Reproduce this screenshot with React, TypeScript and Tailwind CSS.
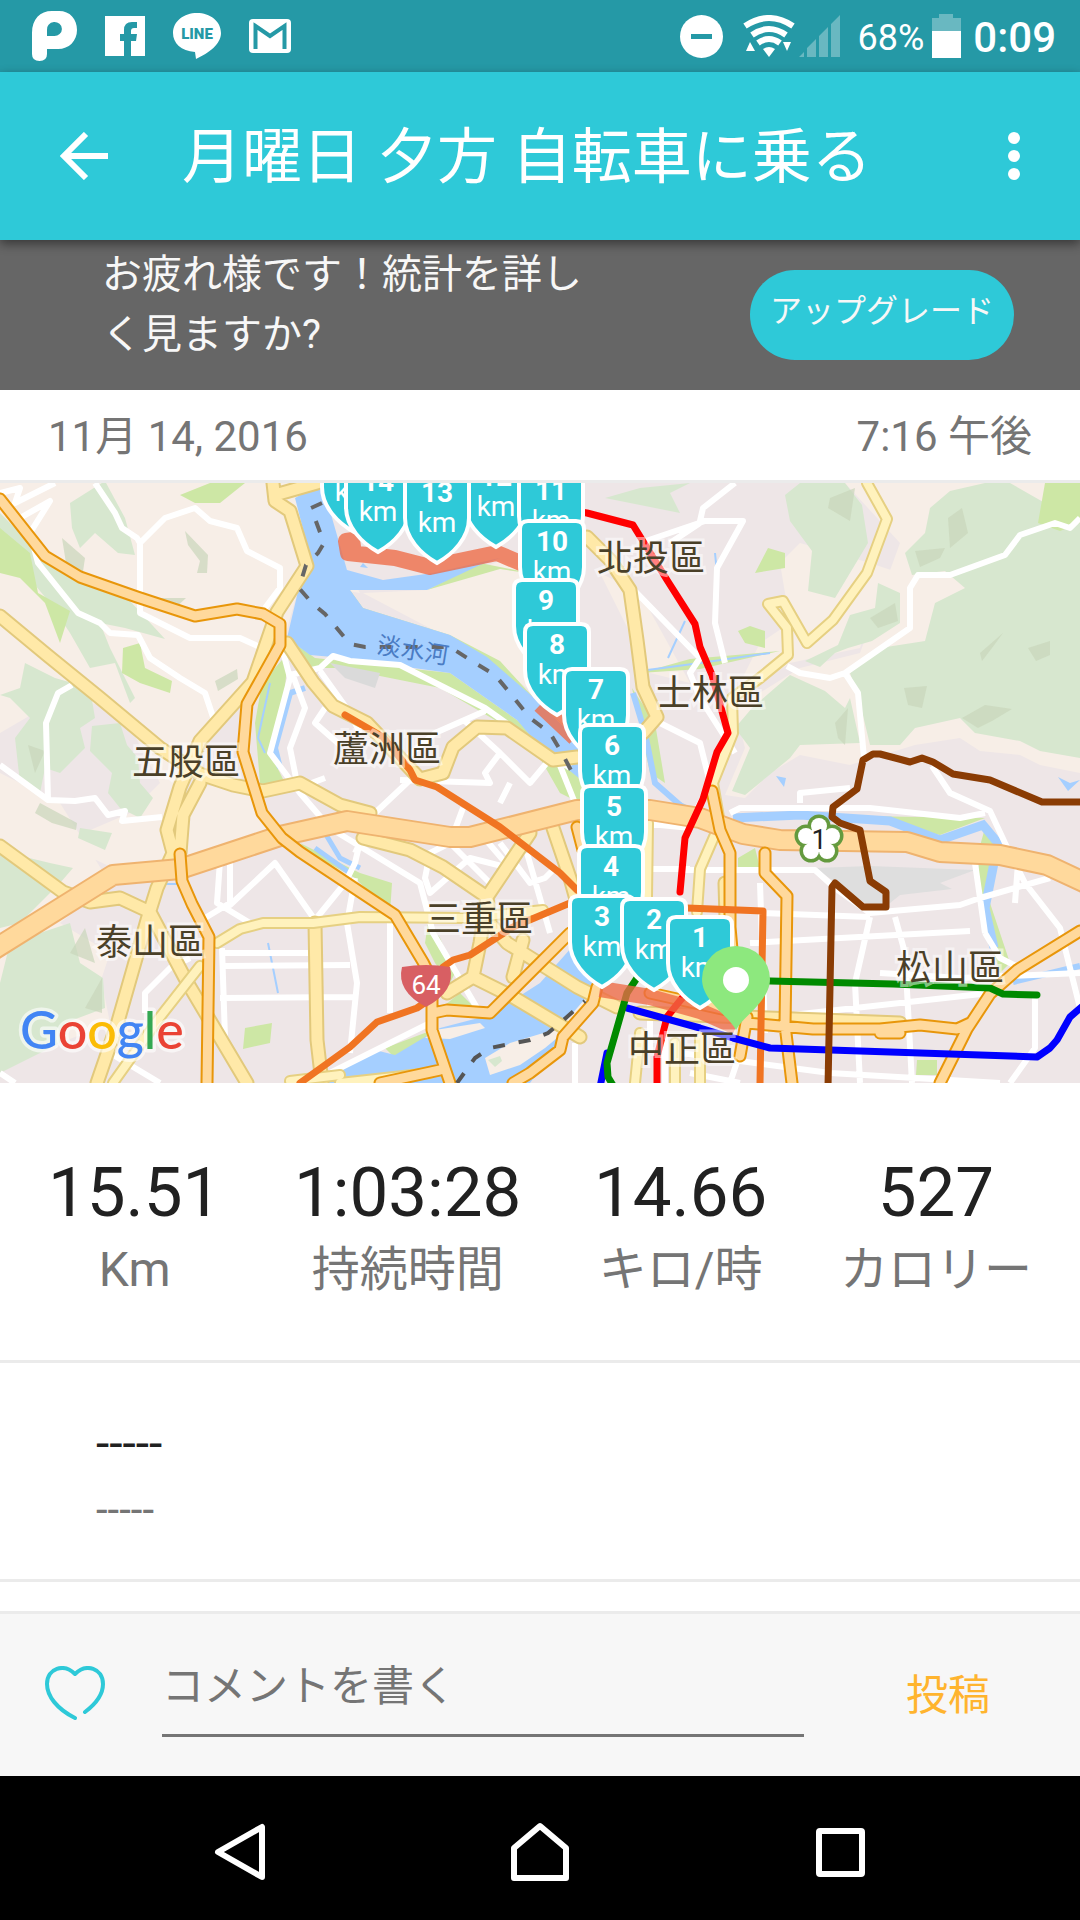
import React from 'react';

interface Marker {
  km: number;
  x: number;
  y: number;
}

// x is the centre of the badge, y its top edge
const markers: Marker[] = [
  { km: 15, x: 354, y: -44 },
  { km: 12, x: 496, y: -29 },
  { km: 14, x: 378, y: -24 },
  { km: 11, x: 551, y: -15 },
  { km: 13, x: 437, y: -13 },
  { km: 10, x: 552, y: 36 },
  { km: 9, x: 546, y: 95 },
  { km: 8, x: 557, y: 139 },
  { km: 7, x: 596, y: 184 },
  { km: 6, x: 612, y: 240 },
  { km: 5, x: 614, y: 301 },
  { km: 4, x: 611, y: 361 },
  { km: 3, x: 602, y: 411 },
  { km: 2, x: 654, y: 414 },
  { km: 1, x: 700, y: 432 },
];

const districts = [
  { name: '五股區', x: 186, y: 292 },
  { name: '蘆洲區', x: 387, y: 279 },
  { name: '北投區', x: 651, y: 88 },
  { name: '士林區', x: 710, y: 223 },
  { name: '泰山區', x: 150, y: 472 },
  { name: '三重區', x: 479, y: 449 },
  { name: '中正區', x: 682, y: 579 },
  { name: '松山區', x: 950, y: 498 },
];

const stats = [
  { value: '15.51', label: 'Km' },
  { value: '1:03:28', label: '持続時間' },
  { value: '14.66', label: 'キロ/時' },
  { value: '527', label: 'カロリー' },
];

const beige = [
  'M0 0H315L347 87L360 110L300 100L283 160L250 210L200 270L170 330L175 380L113 385L60 360L130 330L160 300L120 225L60 215L0 250Z',
  'M0 290L60 320L110 400L60 440L110 470L100 500L0 520Z',
  'M195 300L250 310L262 335L275 350L185 380Z',
  'M363 110L427 107L500 78L540 90L560 150L600 200L540 215L487 174L420 140Z',
  'M600 90L640 110L690 200L650 190Z',
  'M780 80L800 60L870 80L900 90L905 120L870 130L860 165L790 180L760 200L740 200L760 160L790 140Z',
  'M845 0H1080V290L1040 282L1020 272L980 268L960 255L915 262L850 282L800 272L770 290L745 315L725 312L745 265L735 225L800 185L860 170L900 60Z',
  'M40 480L100 490L110 540L60 560Z',
];

const hills = [
  'M70 20L105 -2L125 35L135 72L118 70L95 50L80 65L72 45Z',
  'M0 30L30 60L55 80L130 118L165 156L125 145L100 140L110 165L135 215L130 220L115 180L90 185L70 150L50 120L25 90L0 70Z',
  'M25 180L55 195L90 205L95 235L80 245L85 265L60 290L45 285L40 310L20 300L15 255L30 235L10 215L0 212L20 205Z',
  'M92 243L120 240L127 262L138 275L140 300L153 315L140 335L120 325L108 310L112 290L90 268Z',
  'M80 345L112 350L105 367L78 355Z',
  'M0 368L50 380L73 385L60 400L20 440L0 445Z',
  'M10 460L70 440L80 480L103 495L105 525L65 540L60 560L30 575L0 590V500Z',
  'M605 15L640 5L690 0L670 10L680 30L655 25Z',
  'M785 12L800 0L845 0L862 22L868 60L850 90L835 115L808 108L812 68L790 38Z',
  'M905 70L925 50L930 25L950 8L985 0H1010L1080 40V275L1040 268L1020 258L975 250L960 235L915 245L900 262L870 262L860 220L850 190L880 165L925 158L935 120L965 105L945 88L912 92Z',
  'M835 170L820 184L805 178L838 162L850 132L875 125L878 100L900 110V140L872 158L848 165Z',
  'M752 225L790 192L825 208L845 225L850 215L860 260L800 262L790 275L745 312L732 308L750 265L735 245Z',
];

const darkHills = [
  'M185 48L208 72L207 90L197 90L200 78L188 62Z',
  'M160 115L186 115L172 128L155 120Z',
  'M215 198L237 186L238 196L218 208Z',
  'M40 320L77 340L76 347L52 340L35 330Z',
  'M62 55L85 75L82 95L66 80Z',
  'M85 445L95 480L70 470Z',
  'M85 525L102 495V530Z',
  'M28 262L45 268L35 290Z',
  'M830 15L855 5L850 38L828 25Z',
  'M980 170L1003 150L992 165L982 178Z',
  'M962 235L985 222L1012 226L992 238L978 245Z',
  'M904 205L927 203L922 225L908 222Z',
  'M835 240L848 225L845 262L838 255Z',
  'M1028 165L1050 158V172L1036 178Z',
  'M915 68L945 65L940 75L920 84Z',
  'M948 35L962 25L968 50L950 65Z',
  'M870 135L895 120L898 138L878 145Z',
];

const parks = [
  'M0 45L30 70L38 110L70 128L60 160L45 120L20 95L0 90Z',
  'M123 165L140 160L145 185L172 198L170 210L140 200L122 190Z',
  'M180 12L210 0H245L220 20L195 20Z',
  'M350 107L363 125L450 152L500 178L533 214L575 252L520 205L450 160L355 128Z',
  'M287 155L315 175L450 190L517 237L585 295L600 330L560 310L540 275L500 240L440 205L340 185L300 185Z',
  'M427 107L480 80L520 88L540 92L500 86Z',
  'M262 200L288 170L285 205L270 270L290 310L260 300L255 240Z',
  'M300 360L360 390L392 400L390 430L355 395L310 370Z',
  'M428 440L440 455L455 490L450 500L435 480L425 460Z',
  'M385 565L430 548L440 552L395 575Z',
  'M435 530L460 510L475 525Z',
  'M755 90L768 65L785 70V85Z',
  'M738 148L750 143L765 148V165L745 160Z',
  'M690 176L780 168L700 186L640 190Z',
  'M860 333L985 335L940 352Z',
  'M985 345L1000 360L990 420L1010 480L1000 490L980 425L978 370Z',
  'M738 375L755 365L760 385L738 385Z',
  'M917 577H937V592H916Z',
  'M1038 40L1045 0H1080V40L1060 48Z',
  'M632 205L655 240L665 300L650 290Z',
  'M245 545L272 540L270 560L243 566Z',
];

const minorRoads = [
  'M0 10L20 5L15 20L55 0M20 35L50 18L30 50L38 80L78 130L100 140L110 150L138 152L150 175L180 195L205 210L215 240',
  'M95 0L115 30L122 45L137 55L140 60L165 35L195 25L210 38L237 45L247 68L280 85V105L265 125M140 60L140 130L190 155L240 155L262 165',
  'M0 282L48 317L75 318L95 315L108 332L125 328L122 338L162 334M48 317L46 240L58 210L72 202',
  'M282 165L290 195L270 270L300 310L330 345L420 400L433 450L480 530',
  'M290 192L320 185L333 173L350 178L400 182L485 225L570 285',
  'M320 188L350 230L360 250M325 225L315 240L340 262M292 190L305 225L290 265L298 305L325 295',
  'M220 378L217 420L250 440M230 380L230 422L275 380L315 437M205 435L230 420M315 437L345 400L355 380L362 350',
  'M220 470H312M225 483L350 482M220 515L353 514M222 465L225 555M355 395L347 440L357 500L350 570M390 430V530M145 530V510L170 485L190 475',
  'M110 570L160 600M0 590L15 600M330 590L430 540M355 370L375 330L410 297M340 345L370 330',
  'M463 325L450 360L430 370L425 395L430 410L470 375L510 385L480 350L545 340L580 330M450 360L490 400M500 360L530 400L545 395L555 385M527 370L550 450',
  'M400 280L435 250L485 228M465 238L500 270L530 300L555 270M500 270L485 290L490 300L400 297M555 270L575 320M500 320L510 300',
  'M632 105L700 175L690 190L700 215L735 270M660 240L700 260L710 300L690 340M640 60L705 38',
  'M735 0L703 25L700 38H743L717 85L715 140L725 180M670 60L700 40M787 183L800 190L830 195L845 190L910 145V105L918 92L950 92L1005 72L1020 52L1055 40L1070 45L1080 35',
  'M845 190L858 210L864 275M932 283L950 310L990 328L1005 360L1025 400L1060 445L1080 525M730 330L740 325L870 325L960 335L985 330M800 320V310L850 305',
  'M680 387H815L835 405L870 430L960 422L980 415L1050 395M760 430L870 434M750 460L970 448M975 380L985 450M1018 380L1015 420',
  'M870 434L855 500L860 600M895 434L905 470L912 600M760 400L765 550M765 535L990 510M1035 515V565L1010 600M680 570L830 590L1000 600M880 490L960 495L1080 490',
  'M640 340L690 345M640 386H690M650 330L648 460M985 450L1000 475L1020 485M650 520V570M665 540V600M575 560L575 600M690 590L740 600M740 570L730 600',
];

const yellowRoads = [
  'M0 133L47 172L100 215L160 265L200 291L233 302L263 308L300 300L340 322L370 330',
  'M273 0L275 18L290 28L307 83L277 129L253 199L200 258L180 304L167 347L173 370L157 405L147 437L117 542L97 600',
  'M275 12L317 0M200 300L183 332L180 370',
  'M0 363L63 409L90 419L120 415L150 429L187 499L247 600',
  'M315 440L317 557L322 600',
  'M287 160L313 199L333 223L367 240L420 296L443 290L453 264L477 244L507 245L553 277L577 274',
  'M587 54L610 77L630 107L637 157L643 204L657 234L643 250',
  'M363 355L410 367L443 384L487 414L490 440L507 460L550 487L577 504L617 524',
  'M530 350L487 414L480 460L473 494L447 510M473 494L513 514L580 554M513 494L523 457',
  'M553 345L570 395L577 420M640 530L900 540M725 400L727 470',
];

const paleRoads = [
  'M217 460L240 446L263 440L313 440L360 434L467 435L543 427',
  'M200 483L160 534L113 600M290 598L340 592',
  'M867 0L887 36L867 90L833 137L807 160L783 118L768 121L787 145L788 172L760 195L732 215L733 250L713 300L720 340L700 386L697 429',
  'M648 340L647 414M640 550L635 600M675 560V600M700 555V600M340 600L430 590',
];

const orangeRoads = [
  'M0 16L45 73L80 94L137 114L195 133L237 126L263 131L280 141V162L247 221L243 269L262 330L282 355L300 369L395 432L423 479L432 497V547L450 600',
  'M180 371L182 398L192 421L209 454L207 600',
  'M433 530L447 527L490 530L570 450M597 504L593 520L563 554L560 567L530 590L513 600M380 600L440 587',
  'M577 344L583 367M712 308L720 347L730 370V444L735 500M747 534L740 573M765 370V390L787 413L785 542L792 600',
  'M747 540L813 546L880 546L920 542L957 546L970 540M880 550L900 550M1080 448L1017 487L990 511L967 546L940 600M650 510L740 530',
];

const highway =
  'M-10 469L113 392L180 386L280 353L347 338L450 354H470L577 327H650L700 335L743 351L780 357L907 359L940 369L1000 372L1047 382L1090 402';

const Roads: React.FC<{ paths: string[]; casing: string; fill: string; width: number }> = ({ paths, casing, fill, width }) => {
  const d = paths.join('');
  return (
    <g fill="none" strokeLinejoin="round" strokeLinecap="round">
      <path d={d} stroke={casing} strokeWidth={width} />
      <path d={d} stroke={fill} strokeWidth={width - 4} />
    </g>
  );
};

const KmMarker: React.FC<Marker> = ({ km, x, y }) => (
  <g transform={`translate(${x} ${y})`} textAnchor="middle" fill="#fff">
    <path
      d="M-24 2H24Q32 2 32 10V48C32 68 16 84 0 93C-16 84 -32 68 -32 48V10Q-32 2 -24 2Z"
      fill="#2ec9d8"
      stroke="#fff"
      strokeWidth="4"
    />
    <text y="32" fontSize="28" fontWeight="700">{km}</text>
    <text y="62" fontSize="28">km</text>
  </g>
);

const RouteMap: React.FC = () => (
  <svg viewBox="0 0 1080 600" className="block w-full h-auto" role="img" aria-label="ルート">
    <rect width="1080" height="600" fill="#eee6e7" />
    <path d={beige.join('')} fill="#f7eee7" />
    <path d={hills.join('')} fill="#d7e7cf" />
    <path d={parks.join('')} fill="#cde7a5" />
    <path d={darkHills.join('')} fill="#c9d6bb" opacity="0.7" />
    <path d="M815 385L870 383L975 387L940 400L952 406L900 412L885 424L865 420Z" fill="#dedede" />
    <path d="M330 180L380 190L375 205L345 195Z" fill="#dadada" />

    {/* water */}
    <path
      d="M322 0L347 87L383 97L433 90L500 75L480 82L427 107L350 107L363 125L450 152L487 174L533 214L567 247L600 290L610 400L600 500L590 530L560 560L530 600H322L350 580L375 567L395 572L440 545L490 532L540 500L580 455L590 400L585 300L540 264L517 237L450 190L333 174L310 172L287 155L300 100L313 85L295 15Z"
      fill="#a5cfff"
    />
    <path d="M363 80L368 85L360 84Z" fill="#a5cfff" />
    <path d="M485 575L510 560L560 545L590 510L575 540L545 565L520 582L490 592Z" fill="#f7eee7" />
    <path d="M435 547L480 540L485 545L450 556L425 555Z" fill="#f7eee7" />
    <path d="M488 577L500 573L502 578L495 584Z" fill="#d7e7cf" />
    <g fill="none" stroke="#a5cfff">
      <path d="M733 335L800 332L890 338L940 357L983 342L998 360L985 425L994 465" strokeWidth="9" />
      <path d="M1013 499L1080 483M633 210L645 250L655 300L680 322M305 205L290 210L275 265L280 285" strokeWidth="6" />
      <path d="M640 188L700 180L770 170M685 138L668 175M715 70L717 90M270 200L258 255L265 270M155 401H180M268 460L278 510M680 320L690 325" strokeWidth="2" />
      <path d="M315 365L350 390M325 350L340 375L360 385" strokeWidth="5" />
    </g>
    <path d="M776 293L786 295L784 304ZM1058 294L1070 300L1080 297L1068 308Z" fill="#a5cfff" />

    <path d={minorRoads.join('')} fill="none" stroke="#fff" strokeWidth="6" strokeLinejoin="round" />
    <Roads paths={yellowRoads} casing="#e2c97c" fill="#ffe9a8" width={15} />
    <Roads paths={paleRoads} casing="#e6d082" fill="#fff2bd" width={12} />
    <Roads paths={[highway]} casing="#efb36f" fill="#ffd99c" width={22} />
    <Roads paths={orangeRoads} casing="#e8960a" fill="#ffd99c" width={13} />

    <path
      d="M322 20L311 25L324 60L318 70L306 82L299 105L312 120L325 131L350 161L365 164H450L475 180L495 192L510 210L530 235L550 250L562 270L575 295"
      fill="none"
      stroke="#666"
      strokeWidth="4"
      strokeDasharray="12 14"
    />
    <path d="M457 600L475 575L490 565L530 557L548 550L560 540L585 518" fill="none" stroke="#555" strokeWidth="4" strokeDasharray="12 14" />

    {/* transit lines */}
    <g fill="none" strokeWidth="7" strokeLinejoin="round" strokeLinecap="round">
      <path d="M345 232L383 254L410 287L415 297L437 304L500 344L560 390L577 407M300 600L350 564L377 539L417 525L433 514L443 484L453 477L470 472L513 444L570 420M687 425L763 428L760 600" stroke="#f07422" />
      <path d="M575 28L587 30L633 42L667 97L695 141L700 164L712 192L728 250L717 269L703 316L685 355L680 409M683 514L667 534L657 574V604" stroke="#f00" />
      <path d="M607 570L600 604M627 525L700 545L733 555L770 565L1037 574L1050 565L1057 557L1070 534L1084 522" stroke="#00f" />
      <path d="M637 495L627 510L607 580L608 594L614 604M770 498L893 501L990 505L1003 511L1037 512" stroke="#008a00" />
      <path d="M1090 319H1042L990 297L953 291L933 279L922 275L910 279L880 271H873L863 277L857 306L833 324L832 334L840 340L860 347L870 398L886 409V424H863L835 400L832 404L828 604" stroke="#8a3c04" />
    </g>

    {/* ridden route */}
    <path
      d="M360 56L346 58L348 70L395 75L430 84L497 70L530 84M540 222L575 255M600 506L650 514L700 528L736 544"
      fill="none"
      stroke="#ee6a45"
      strokeOpacity="0.78"
      strokeWidth="16"
      strokeLinejoin="round"
    />

    <g
      className="font-['Noto_Sans_CJK_TC',sans-serif]"
      fontSize="36"
      textAnchor="middle"
      fill="#4a4028"
      stroke="#fff"
      strokeOpacity="0.5"
      strokeWidth="6"
      paintOrder="stroke"
    >
      {districts.map((d) => (
        <text key={d.name} x={d.x} y={d.y}>{d.name}</text>
      ))}
    </g>
    <text
      transform="translate(376 170) rotate(9)"
      fontSize="24"
      fill="#4a7cc4"
      className="font-['Noto_Sans_CJK_TC',sans-serif]"
    >
      淡水河
    </text>

    {/* road shields */}
    <path d="M402 484Q426 480 450 484Q456 508 426 524Q396 508 402 484Z" fill="#d85f63" />
    <text x="426" y="511" fontSize="26" textAnchor="middle" fill="#fff">64</text>
    <g fill="#fff" stroke="#649a3e" strokeWidth="5">
      <circle cx="819" cy="343" r="9" />
      <circle cx="806" cy="353" r="9" />
      <circle cx="832" cy="353" r="9" />
      <circle cx="811" cy="368" r="9" />
      <circle cx="827" cy="368" r="9" />
    </g>
    <g fill="#fff">
      <circle cx="819" cy="343" r="8" />
      <circle cx="806" cy="353" r="8" />
      <circle cx="832" cy="353" r="8" />
      <circle cx="811" cy="368" r="8" />
      <circle cx="827" cy="368" r="8" />
      <circle cx="819" cy="357" r="12" />
    </g>
    <text x="819" y="366" fontSize="27" textAnchor="middle" fill="#222">1</text>

    <g className="font-['Roboto','Noto_Sans_CJK_JP',sans-serif]">
      {markers.map((m) => (
        <KmMarker key={m.km} {...m} />
      ))}
    </g>
    <path d="M736 547C728 532 702 518 702 496A34 33 0 0 1 770 496C770 518 744 532 736 547Z" fill="#8de87e" />
    <circle cx="736" cy="497" r="13" fill="#fff" />

    <text
      x="20"
      y="566"
      fontSize="52"
      fontWeight="500"
      className="font-['Lato',sans-serif]"
      stroke="#fff"
      strokeOpacity="0.6"
      strokeWidth="7"
      strokeLinejoin="round"
      paintOrder="stroke"
    >
      <tspan fill="#4285f4">G</tspan>
      <tspan fill="#ea4335">o</tspan>
      <tspan fill="#fbbc05">o</tspan>
      <tspan fill="#4285f4">g</tspan>
      <tspan fill="#34a853">l</tspan>
      <tspan fill="#ea4335">e</tspan>
    </text>
  </svg>
);

const StatusBar: React.FC = () => (
  <div className="flex h-[72px] items-center justify-between bg-[#2599a6] pl-8 pr-6 text-white">
    <div className="flex items-center gap-7">
      <svg width="45" height="50" viewBox="0 0 45 50">
        <path fillRule="evenodd" fill="#fff" d="M0 22C0 8 8 0 20 0H27C38 0 45 8 45 19S37 38 26 38H15V43Q15 50 7.500 50T0 43ZM15 25V19A7.500 7 0 1 1 22 25Z" />
      </svg>
      <svg width="40" height="40" viewBox="0 0 40 40">
        <path fillRule="evenodd" fill="#fff" d="M0 0H40V40H26V25H31L32 18H26V15Q26 12 29 12H32V6H27Q19 6 19 14V18H15V25H19V40H0Z" />
      </svg>
      <svg width="48" height="48" viewBox="0 0 48 48">
        <path fill="#fff" d="M24 1C37 1 48 9 48 21C48 32 36 41 23 47L22 40C8 39 0 31 0 21C0 9 11 1 24 1Z" />
        <text x="24" y="27" fontSize="15" fontWeight="900" textAnchor="middle" fill="#2599a6">LINE</text>
      </svg>
      <svg width="42" height="34" viewBox="0 0 42 34">
        <rect width="42" height="34" rx="4" fill="#fff" />
        <path d="M6.500 30V7L21 17L35.500 7V30" fill="none" stroke="#2599a6" strokeWidth="4" />
      </svg>
    </div>
    <div className="flex items-center">
      <svg width="43" height="43" viewBox="0 0 43 43">
        <circle cx="21.500" cy="21.500" r="21.500" fill="#fff" />
        <path d="M11 21.500H32" stroke="#2599a6" strokeWidth="5" />
      </svg>
      <svg width="52" height="42" viewBox="0 0 52 42" className="ml-5">
        <g fill="none" stroke="#fff" strokeWidth="6">
          <path d="M2 11Q26 -5 50 11" />
          <path d="M9 20Q26 8 43 20" />
          <path d="M15 28Q26 20 37 28" />
        </g>
        <path d="M20 34Q26 30 32 34L26 42ZM7 27L12 36H3ZM40 27H48L44 36Z" fill="#fff" />
      </svg>
      <svg width="42" height="42" viewBox="0 0 42 42" className="ml-1">
        <path d="M0 42L5 37V42ZM8 42V33L17 24V42ZM20 42V21L29 12V42ZM32 42V9L41 0V42Z" fill="#69b8c1" />
      </svg>
      <span className="ml-4 pt-1 text-[36px] leading-[42px]">68%</span>
      <svg width="29" height="44" viewBox="0 0 29 44" className="ml-2">
        <path d="M7 0H21V4H29V17H0V4H7Z" fill="#69b8c1" />
        <path d="M0 17H29V44H0Z" fill="#fff" />
      </svg>
      <span className="ml-3 pt-1 text-[42px] font-medium leading-[42px]">0:09</span>
    </div>
  </div>
);

const App: React.FC = () => {
  return (
    <div className="flex min-h-screen flex-col bg-white font-['Roboto','Noto_Sans_CJK_JP',sans-serif]">
      <StatusBar />

      <header className="relative z-10 flex h-[168px] items-center bg-[#2ec9d8] pl-[60px] pr-12 text-white shadow-[0_4px_10px_rgba(0,0,0,0.45)]">
        <button type="button" aria-label="戻る">
          <svg width="48" height="48" viewBox="0 0 48 48">
            <path d="M26 2L4 24L26 46M4 24H48" fill="none" stroke="#fff" strokeWidth="6" />
          </svg>
        </button>
        <h1 className="ml-[74px] flex-1 pt-1 text-[60px] leading-[72px]">月曜日 夕方 自転車に乗る</h1>
        <button type="button" aria-label="メニュー">
          <svg width="36" height="48" viewBox="0 0 36 48">
            <circle cx="18" cy="6" r="6" fill="#fff" />
            <circle cx="18" cy="24" r="6" fill="#fff" />
            <circle cx="18" cy="42" r="6" fill="#fff" />
          </svg>
        </button>
      </header>

      <section className="flex h-[150px] items-start justify-between bg-[#666] pl-[102px] pr-[66px] text-[#f7f7f7]">
        <p className="w-[490px] pt-[5px] text-[40px] leading-[60px]">お疲れ様です！統計を詳しく見ますか?</p>
        <button type="button" className="mt-[30px] h-[90px] w-[264px] rounded-full bg-[#2ec9d8] pb-2 text-[32px]">
          アップグレード
        </button>
      </section>

      <div className="flex h-[93px] items-center justify-between border-b-[3px] border-[#ebebeb] px-12 pt-[2px] text-[42px] text-[#757575]">
        <span>11月 14, 2016</span>
        <span>7:16 午後</span>
      </div>

      <RouteMap />

      <section className="flex justify-between border-b-[3px] border-[#ebebeb] px-12 pb-[53px] pt-[70px] text-center">
        {stats.map((s) => (
          <div key={s.label}>
            <div className="text-[69px] leading-[80px] text-[#212121]">{s.value}</div>
            <div className="text-[48px] leading-[74px] text-[#757575]">{s.label}</div>
          </div>
        ))}
      </section>

      <section className="border-b-[3px] border-[#ebebeb] px-24 pb-[36px] pt-[48px]">
        <p className="text-[48px] leading-[66px] text-[#212121]">-----</p>
        <p className="text-[42px] leading-[66px] text-[#757575]">-----</p>
      </section>

      <form className="mt-auto flex h-[165px] items-center border-t-[3px] border-[#ebebeb] bg-[#f7f7f7] pl-[45px] pr-[90px]">
        <button type="button" aria-label="いいね" className="pb-1">
          <svg width="60" height="54" viewBox="0 0 60 54">
            <path
              d="M40 46C52 37 58 27 58 18C58 2 41 -3 30 8C19 -3 2 2 2 18C2 30 12 43 30 52"
              fill="none"
              stroke="#2ec9d8"
              strokeWidth="4"
              strokeLinecap="round"
              strokeLinejoin="round"
            />
          </svg>
        </button>
        <input
          type="text"
          aria-label="コメントを書く"
          placeholder="コメントを書く"
          className="ml-[57px] h-[84px] min-w-0 flex-1 border-b-[3px] border-[#757575] bg-transparent px-0 pb-[14px] text-[42px] outline-none placeholder:text-[#757575]"
        />
        <button type="submit" className="ml-[102px] text-[42px] text-[#ffb42e]">投稿</button>
      </form>

      <nav className="grid h-[144px] grid-cols-3 items-center bg-black px-[90px] pt-2">
        <button type="button" aria-label="戻る" className="flex justify-center">
          <svg width="60" height="60" viewBox="0 0 60 60">
            <path d="M52 5V55L8 30Z" fill="none" stroke="#fff" strokeWidth="6" strokeLinejoin="round" />
          </svg>
        </button>
        <button type="button" aria-label="ホーム" className="flex justify-center">
          <svg width="60" height="60" viewBox="0 0 60 60">
            <path d="M30 4L56 26V56H4V26Z" fill="none" stroke="#fff" strokeWidth="6" strokeLinejoin="round" />
          </svg>
        </button>
        <button type="button" aria-label="アプリ一覧" className="flex justify-center">
          <svg width="60" height="60" viewBox="0 0 60 60">
            <rect x="9" y="9" width="43" height="43" rx="1" fill="none" stroke="#fff" strokeWidth="6" />
          </svg>
        </button>
      </nav>
    </div>
  );
};

export default App;
